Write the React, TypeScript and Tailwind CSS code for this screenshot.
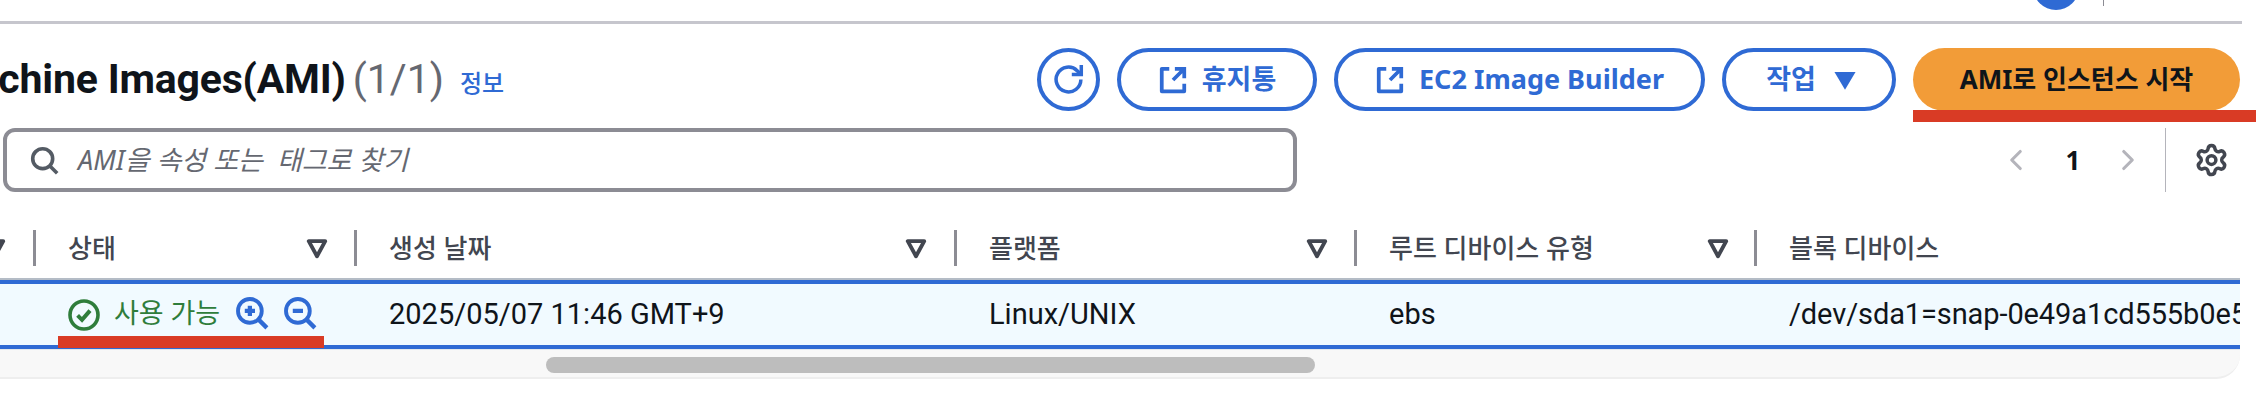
import { ChevronLeft, ChevronRight, Settings } from "lucide-react"

const fontStack = "font-['Noto_Sans','Noto_Sans_CJK_KR',sans-serif]"
const latinStack = "font-['Roboto','Noto_Sans_CJK_KR',sans-serif]"

function ExternalIcon() {
    return (
        <svg viewBox="0 0 16 16" className="w-[30px] h-[30px]" fill="none" stroke="currentColor" strokeWidth="2">
            <path d="M6 2H2v12h12v-4" strokeLinejoin="round" />
            <path d="M9 2h5v5M14 2 8 8" />
        </svg>
    )
}

function RefreshIcon() {
    return (
        <svg viewBox="0 0 16 16" className="w-[33px] h-[33px]" fill="none" stroke="currentColor" strokeWidth="1.7">
            <path d="M14 8a6 6 0 1 1-1.8-4.3L14 5.5" />
            <path d="M14.2 1v4.6H9.6" />
        </svg>
    )
}

function FilterIcon() {
    return (
        <svg viewBox="0 0 16 16" className="w-[22px] h-[22px] shrink-0 text-[#424650]" fill="none" stroke="currentColor" strokeWidth="2.8">
            <path d="M2 3h12L8 14z" strokeLinejoin="round" />
        </svg>
    )
}

function ZoomIcon({ plus }: { plus?: boolean }) {
    return (
        <svg viewBox="0 0 16 16" className="w-[34px] h-[34px] text-[#2f6ad4]" fill="none" stroke="currentColor" strokeWidth="1.8">
            <circle cx="7" cy="7" r="5.6" />
            <path d="m11 11 4 4" strokeWidth="2" />
            <path d="M4.6 7h4.8" strokeWidth="2" />
            {plus && <path d="M7 4.6v4.8" strokeWidth="2" />}
        </svg>
    )
}

function OutlineButton({ children, className }: { children: React.ReactNode; className: string }) {
    return (
        <button className={`h-[63px] flex items-center justify-center rounded-full border-[4px] border-[#2f6ad4] text-[#2f6ad4] text-[27px] font-bold ${className}`}>
            {children}
        </button>
    )
}

function HeaderCell({ label, className, filter = true }: { label: string; className: string; filter?: boolean }) {
    return (
        <div className={`flex items-center h-[36px] border-l-[3px] border-[#8c8c94] pl-[32px] ${className}`}>
            <span className="flex-1 text-[26px] font-medium text-[#424650] whitespace-nowrap">{label}</span>
            {filter && <FilterIcon />}
        </div>
    )
}

export default function App() {
    return (
        <div className={`relative w-[2256px] h-[412px] overflow-hidden bg-white ${fontStack}`}>
            {/* top nav remains */}
            <div className="flex justify-end items-start w-[2242px] h-[24px] border-b-[3px] border-[#c6c6cd]">
                <div className="-mt-[36px] w-[46px] h-[46px] rounded-full bg-[#2f6ad4]" />
                <div className="ml-[24px] mr-[138px] w-[1px] h-[6px] bg-[#8c8c94]" />
            </div>

            {/* title + actions */}
            <div className="mt-[24px] h-[63px] flex items-center w-[2240px]">
                <div className="w-[444px] flex justify-end">
                    <h1 className={`shrink-0 text-[41px] font-bold tracking-[-0.2px] text-[#0f141a] whitespace-nowrap ${latinStack}`}>
                        Amazon Machine Images(AMI) <span className="-ml-[3px] font-normal tracking-normal text-[#656871]">(1/1)</span>
                    </h1>
                </div>
                <a className="ml-[16px] mt-[6px] text-[24px] font-medium text-[#2f6ad4]">정보</a>
                <div className="ml-auto flex items-center">
                    <OutlineButton className="w-[63px]">
                        <RefreshIcon />
                    </OutlineButton>
                    <OutlineButton className="ml-[17px] w-[200px] gap-[14px]">
                        <ExternalIcon />
                        휴지통
                    </OutlineButton>
                    <OutlineButton className="ml-[17px] w-[371px] gap-[14px]">
                        <ExternalIcon />
                        EC2 Image Builder
                    </OutlineButton>
                    <OutlineButton className="ml-[17px] w-[174px] gap-[16px] pl-[6px]">
                        작업
                        <svg viewBox="0 0 16 16" className="w-[26px] h-[26px]" fill="currentColor">
                            <path d="M1.5 3h13L8 14z" />
                        </svg>
                    </OutlineButton>
                    <button className="ml-[17px] w-[327px] h-[63px] rounded-full bg-[#f29c38] text-[#0f141a] text-[26px] font-bold">
                        AMI로 인스턴스 시작
                    </button>
                </div>
            </div>

            {/* search + pagination */}
            <div className="mt-[17px] h-[64px] flex items-center">
                <div className="ml-[3px] w-[1294px] h-[64px] flex items-center gap-[19px] pl-[23px] rounded-[12px] border-[4px] border-[#8c8c94]">
                    <svg viewBox="0 0 16 16" className="w-[29px] h-[29px] text-[#545b64]" fill="none" stroke="currentColor" strokeWidth="2">
                        <circle cx="7" cy="7" r="5.5" />
                        <path d="m11 11 4 4" />
                    </svg>
                    <span className="text-[27px] italic text-[#656871] whitespace-pre">AMI을 속성 또는  태그로 찾기</span>
                </div>
                <div className="ml-auto flex items-center">
                    <ChevronLeft className="w-[34px] h-[40px] text-[#b4b4bb]" strokeWidth={2.2} />
                    <span className="ml-[32px] w-[16px] text-center text-[26px] font-bold text-[#0f141a]">1</span>
                    <ChevronRight className="ml-[30px] w-[34px] h-[40px] text-[#b4b4bb]" strokeWidth={2.2} />
                    <div className="ml-[20px] w-[1px] h-[64px] bg-[#b4b4bb]" />
                    <Settings className="ml-[28px] mr-[27px] w-[35px] h-[38px] text-[#424650]" strokeWidth={2.4} />
                </div>
            </div>

            {/* table header */}
            <div className="mt-[38px] flex items-center h-[36px]">
                <div className="w-[33px] flex justify-end pr-[27px]">
                    <FilterIcon />
                </div>
                <HeaderCell label="상태" className="w-[321px] pr-[26px]" />
                <HeaderCell label="생성 날짜" className="w-[600px] pr-[27px]" />
                <HeaderCell label="플랫폼" className="w-[400px] pr-[26px]" />
                <HeaderCell label="루트 디바이스 유형" className="w-[400px] pr-[25px]" />
                <HeaderCell label="블록 디바이스" className="w-[480px]" filter={false} />
            </div>

            {/* selected row */}
            <div className="mt-[12px] w-[2240px] border-t-[2px] border-[#b4bcc6]">
                <div className={`h-[69px] flex items-center bg-[#f1faff] border-y-[4px] border-[#2f6ad4] text-[29px] text-[#0f141a] whitespace-nowrap ${latinStack}`}>
                    <div className="w-[68px]" />
                    <div className="w-[321px] flex items-center">
                        <svg viewBox="0 0 16 16" className="w-[32px] h-[32px] text-[#2f7d3b]" fill="none" stroke="currentColor" strokeWidth="1.8">
                            <circle cx="8" cy="8" r="7" />
                            <path d="m4.8 8.2 2.2 2.2 4-4.6" strokeWidth="2" />
                        </svg>
                        <span className="ml-[14px] text-[27px] text-[#2f7d3b]">사용 가능</span>
                        <span className="ml-[15px] -mt-[4px]"><ZoomIcon plus /></span>
                        <span className="ml-[14px] -mt-[4px]"><ZoomIcon /></span>
                    </div>
                    <div className="w-[600px]">2025/05/07 11:46 GMT+9</div>
                    <div className="w-[400px]">Linux/UNIX</div>
                    <div className="w-[400px]">ebs</div>
                    <div className="w-[451px] overflow-hidden tracking-[-0.1px]">/dev/sda1=snap-0e49a1cd555b0e5</div>
                </div>
                {/* horizontal scrollbar */}
                <div className="h-[30px] pt-[7px] bg-[#f8f8f8] border-t-[1px] border-[#e4e8ec] border-b-[2px] border-b-[#eeeeee] rounded-br-[24px]">
                    <div className="ml-[546px] w-[769px] h-[16px] rounded-full bg-[#bdbdbd]" />
                </div>
            </div>

            {/* red annotation marks */}
            <div className="absolute left-[1913px] top-[110px] w-[343px] h-[12px] bg-[#d93b25]" />
            <div className="absolute left-[58px] top-[336px] w-[266px] h-[12px] bg-[#d93b25]" />
        </div>
    )
}
